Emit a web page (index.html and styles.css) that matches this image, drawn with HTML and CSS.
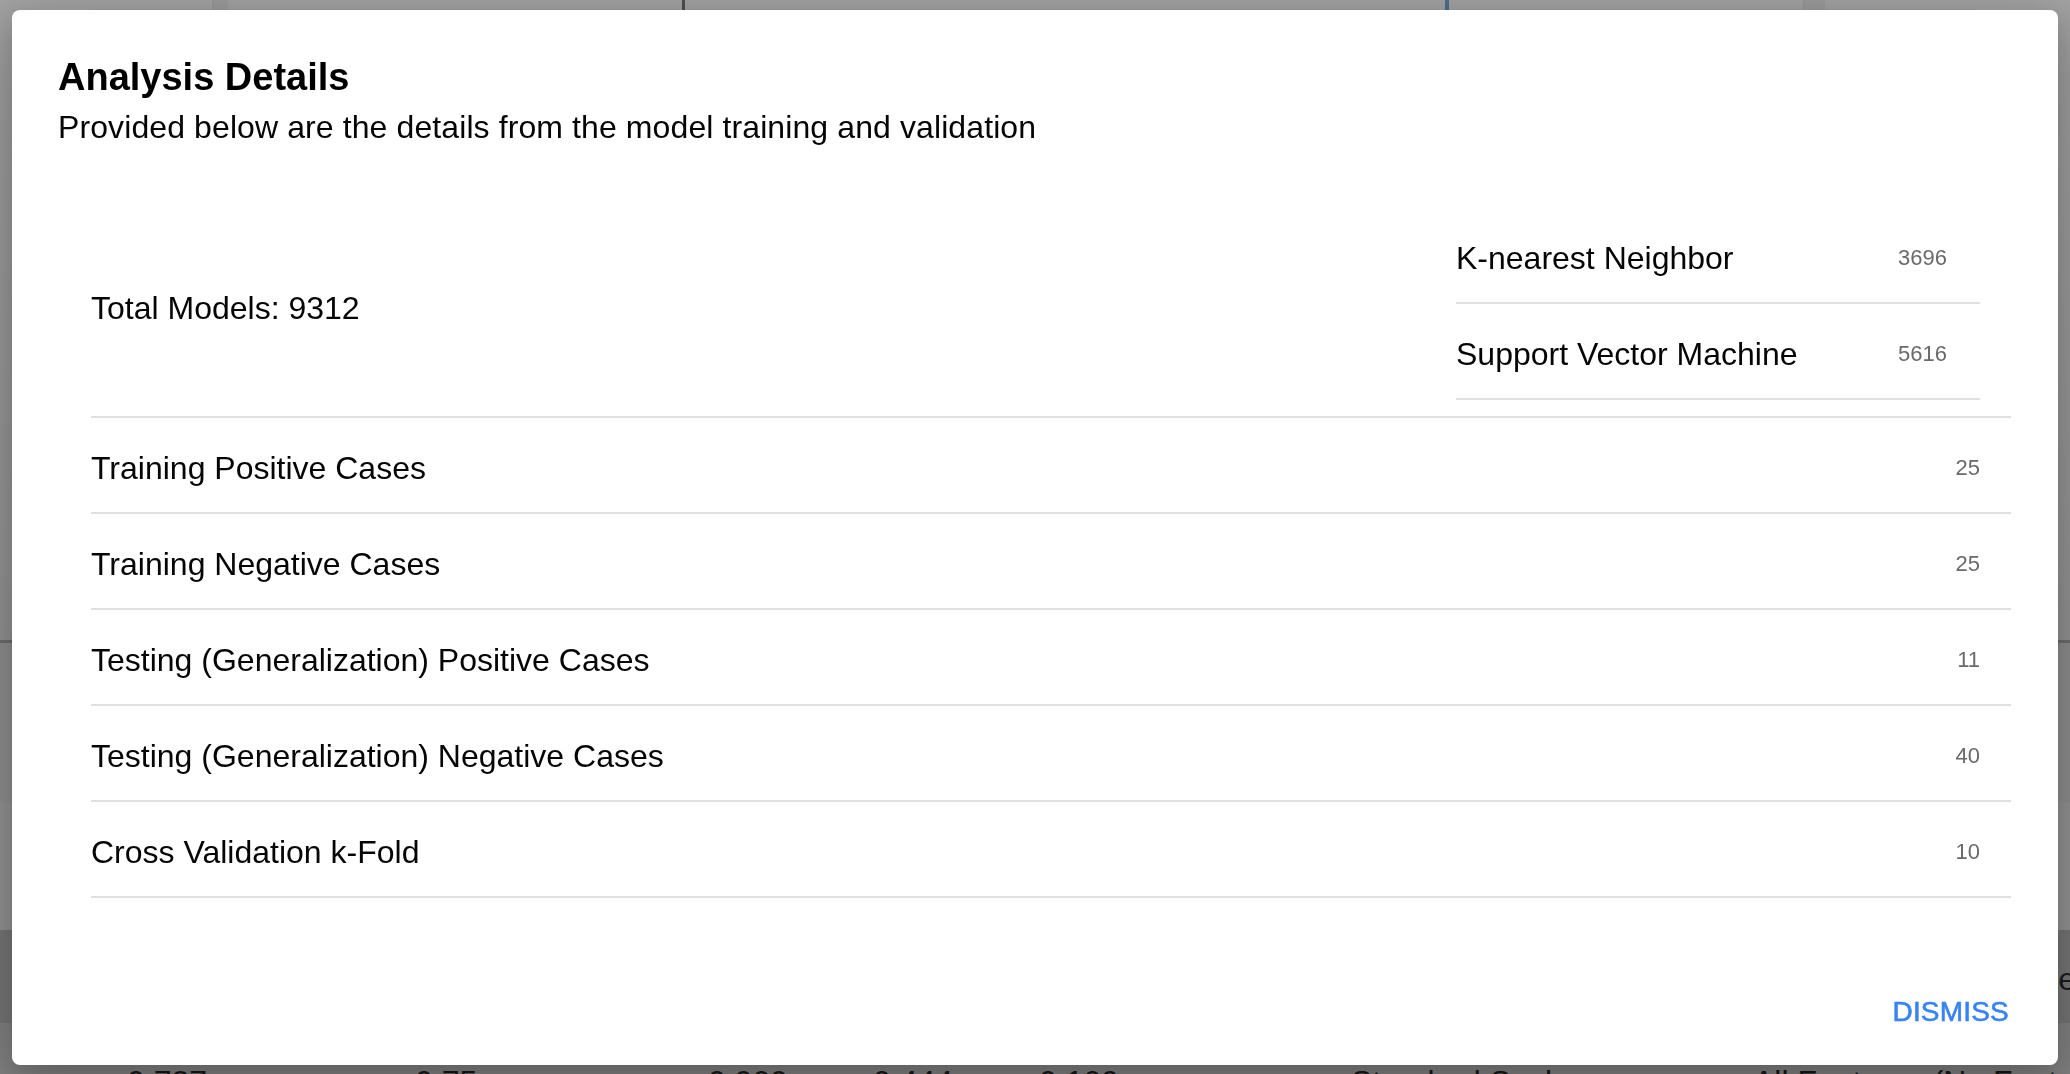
FILE: index.html
```html
<!DOCTYPE html>
<html lang="en">
<head>
<meta charset="utf-8">
<title>Analysis Details</title>
<link rel="stylesheet" href="styles.css">
</head>
<body>
<div class="page">
  <div class="bg-top">
    <div class="bg-cols">
      <div class="col c1"></div>
      <div class="col c2"></div>
      <div class="col c3"></div>
      <div class="col c4"></div>
      <div class="col c5"></div>
      <div class="col c6"></div>
    </div>
  </div>
  <div class="bg-rule"></div>
  <div class="bg-mid"></div>
  <div class="bg-band"><span class="bg-e">e</span></div>
  <div class="bg-low">
    <div class="bg-table">
      <span>0.727</span><span>0.75</span><span>0.909</span><span>0.444</span><span>0.109</span><span>Standard Scaler</span><span>All Features (No Feature Selection)</span>
    </div>
  </div>
</div>

<div class="dialog" role="dialog">
  <header class="dialog-head">
    <h2 class="dialog-title">Analysis Details</h2>
    <p class="dialog-sub">Provided below are the details from the model training and validation</p>
  </header>

  <section class="dialog-content">
    <div class="summary">
      <div class="total">Total Models: 9312</div>
      <ul class="algo-list">
        <li class="algo-row"><span class="label">K-nearest Neighbor</span><span class="value">3696</span></li>
        <li class="algo-row"><span class="label">Support Vector Machine</span><span class="value">5616</span></li>
      </ul>
    </div>

    <ul class="detail-list">
      <li class="detail-row"><span class="label">Training Positive Cases</span><span class="value">25</span></li>
      <li class="detail-row"><span class="label">Training Negative Cases</span><span class="value">25</span></li>
      <li class="detail-row"><span class="label">Testing (Generalization) Positive Cases</span><span class="value">11</span></li>
      <li class="detail-row"><span class="label">Testing (Generalization) Negative Cases</span><span class="value">40</span></li>
      <li class="detail-row"><span class="label">Cross Validation k-Fold</span><span class="value">10</span></li>
    </ul>
  </section>

  <footer class="dialog-actions">
    <button class="btn-dismiss" type="button">Dismiss</button>
  </footer>
</div>
</body>
</html>
```

FILE: styles.css
```css
* { box-sizing: border-box; }

html, body {
  margin: 0;
  padding: 0;
  width: 2070px;
  height: 1074px;
  overflow: hidden;
  font-family: "Liberation Sans", Arial, Helvetica, sans-serif;
}

/* ---------- obscured page behind the backdrop ---------- */
.page {
  width: 2070px;
  height: 1074px;
  display: flex;
  flex-direction: column;
  background: #8e8e8e;
}

.bg-top {
  height: 640px;
  background: linear-gradient(#a2a2a2 0%, #a0a0a0 10%, #939393 100%);
}

.bg-cols {
  height: 24px;
  display: flex;
}

.col { height: 100%; }
.c1 { width: 212px; }
.c2 { width: 16px; background: #9a9a9a; border-left: 2px solid #979797; }
.c3 { width: 457px; border-right: 3px solid #4e4e4e; }
.c4 { width: 764px; border-right: 4px solid #4c6d90; }
.c5 { width: 354px; }
.c6 { width: 22px; background: #9a9a9a; border-left: 2px solid #969696; }

.bg-rule {
  height: 3px;
  background: #6e6e6e;
}

.bg-mid {
  height: 287px;
  background: linear-gradient(#8f8f8f 0%, #8f8f8f 55%, #939393 56%, #939393 100%);
}

.bg-band {
  height: 93px;
  background: #767676;
  display: flex;
  justify-content: flex-end;
  align-items: center;
}

.bg-e {
  font-size: 32px;
  color: #1c1c1c;
  margin-right: -6px;
  padding-top: 6px;
}

.bg-low {
  flex: 1;
  background: #828282;
  display: flex;
  flex-direction: column;
  justify-content: flex-end;
}

.bg-table {
  display: grid;
  grid-template-columns: 288px 293px 165px 166px 312px 402px auto;
  padding-left: 127px;
  font-size: 32px;
  line-height: 40px;
  color: #161616;
  white-space: nowrap;
  margin-bottom: -28px;
}

/* ---------- dialog ---------- */
.dialog {
  position: fixed;
  left: 12px;
  top: 10px;
  width: 2046px;
  height: 1055px;
  background: #ffffff;
  border-radius: 8px;
  box-shadow: 0 22px 70px 8px rgba(0, 0, 0, 0.16), 0 10px 30px rgba(0, 0, 0, 0.18);
  display: flex;
  flex-direction: column;
  color: #050505;
}

.dialog-head {
  padding: 42px 48px 0 46px;
}

.dialog-title {
  margin: 0;
  font-size: 38px;
  font-weight: 700;
  line-height: 50px;
  color: #000000;
}

.dialog-sub {
  margin: 0;
  font-size: 32px;
  line-height: 50px;
  letter-spacing: 0.1px;
  color: #050505;
}

.dialog-content {
  margin: 56px 47px 0 79px;
}

.summary {
  display: flex;
  justify-content: space-between;
  align-items: center;
}

.total {
  font-size: 32px;
  line-height: 40px;
  padding-top: 8px;
  color: #050505;
}

.algo-list,
.detail-list {
  list-style: none;
  margin: 0;
  padding: 0;
}

.algo-list {
  width: 524px;
  margin-right: 31px;
}

.algo-row,
.detail-row {
  height: 96px;
  display: flex;
  align-items: center;
  justify-content: space-between;
  border-bottom: 2px solid #e0e0e0;
  padding-top: 5px;
}

.algo-row { padding-right: 33px; }

.detail-list {
  margin-top: 16px;
  border-top: 2px solid #e0e0e0;
}

.detail-row { padding-right: 31px; }

.label {
  font-size: 32px;
  line-height: 40px;
  color: #050505;
}

.value {
  font-size: 22px;
  line-height: 30px;
  color: #6a6a6a;
}

.dialog-actions {
  margin-top: auto;
  display: flex;
  justify-content: flex-end;
  padding: 0 49px 35px 0;
}

.btn-dismiss {
  border: 0;
  background: transparent;
  padding: 0;
  font-family: "Liberation Sans", Arial, Helvetica, sans-serif;
  font-size: 28px;
  font-weight: 400;
  line-height: 36px;
  letter-spacing: 0.2px;
  text-transform: uppercase;
  color: #3783f4;
  -webkit-text-stroke: 0.6px #3783f4;
  cursor: pointer;
}
```
